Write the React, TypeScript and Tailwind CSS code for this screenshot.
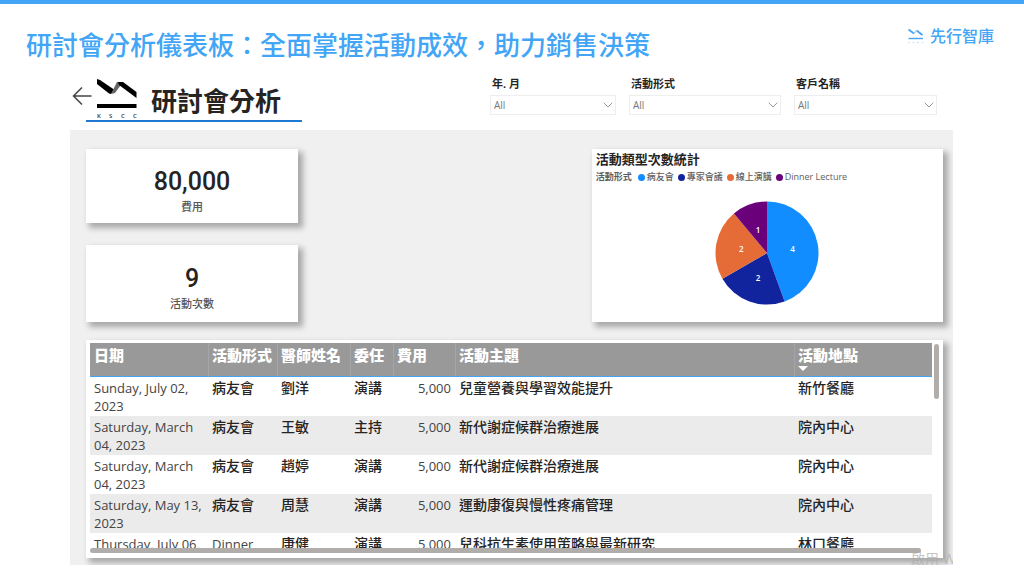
import { ChevronDown } from "lucide-react";

const filters = [
  { id: "month", label: "年. 月", box: "w-[126px]" },
  { id: "type", label: "活動形式", box: "w-[152px]" },
  { id: "client", label: "客戶名稱", box: "w-[143px]" },
];

const kpis = [
  { value: "80,000", label: "費用", box: "h-[74px] pt-[17px]" },
  { value: "9", label: "活動次數", box: "h-[77px] pt-[18px]" },
];

const slices = [
  { name: "病友會", value: 4, fill: "#118dff", dot: "bg-[#118dff]" },
  { name: "專家會議", value: 2, fill: "#12239e", dot: "bg-[#12239e]" },
  { name: "線上演講", value: 2, fill: "#e66c37", dot: "bg-[#e66c37]" },
  { name: "Dinner Lecture", value: 1, fill: "#6b007b", dot: "bg-[#6b007b]" },
];

const columns = ["日期", "活動形式", "醫師姓名", "委任", "費用", "活動主題", "活動地點"];

const rows = [
  ["Sunday, July 02, 2023", "病友會", "劉洋", "演講", "5,000", "兒童營養與學習效能提升", "新竹餐廳"],
  ["Saturday, March 04, 2023", "病友會", "王敏", "主持", "5,000", "新代謝症候群治療進展", "院內中心"],
  ["Saturday, March 04, 2023", "病友會", "趙婷", "演講", "5,000", "新代謝症候群治療進展", "院內中心"],
  ["Saturday, May 13, 2023", "病友會", "周慧", "演講", "5,000", "運動康復與慢性疼痛管理", "院內中心"],
  ["Thursday, July 06, 2023", "Dinner Lecture", "康健", "演講", "5,000", "兒科抗生素使用策略與最新研究", "林口餐廳"],
];

const card = "bg-white shadow-[4px_4px_6px_1px_rgba(0,0,0,0.3)]";

function Pie() {
  const total = slices.reduce((sum, s) => sum + s.value, 0);
  const at = (share: number, r: number) => {
    const a = share * 2 * Math.PI;
    return [52 + r * Math.sin(a), 52 - r * Math.cos(a)];
  };
  let start = 0;
  return (
    <svg viewBox="0 0 104 104" className="h-26 w-26" role="img" aria-label="活動類型次數統計">
      {slices.map((s) => {
        const share = s.value / total;
        const [x1, y1] = at(start, 51.5);
        const [x2, y2] = at(start + share, 51.5);
        const [tx, ty] = at(start + share / 2, 26);
        start += share;
        return (
          <g key={s.name}>
            <path d={`M52 52L${x1} ${y1}A51.5 51.5 0 0 1 ${x2} ${y2}Z`} fill={s.fill} />
            <text x={tx} y={ty + 4} textAnchor="middle" fontSize="8" fontWeight="600" fill="#fff">
              {s.value}
            </text>
          </g>
        );
      })}
    </svg>
  );
}

function KsccLogo() {
  return (
    <svg viewBox="0 0 40 40" className="h-10 w-10" role="img" aria-label="KSCC">
      <path d="M0 0L3 1L17 10.500L14 15L12 14.500L0 5Z" fill="#000" />
      <path d="M14 15L20 3H26L18 14Z" fill="#666" />
      <path d="M21 3H26L39.500 13V19L22 6Z" fill="#000" />
      <rect x="0" y="25" width="39.500" height="4" fill="#000" />
      <g fontSize="6" fontWeight="600" fill="#333">
        <text x="0" y="39">K</text>
        <text x="12" y="39">S</text>
        <text x="24" y="39">C</text>
        <text x="36" y="39">C</text>
      </g>
    </svg>
  );
}

export default function App() {
  return (
    <div className="border-t-4 border-[#42a5f5] bg-white font-['Open_Sans','Noto_Sans_CJK_TC',sans-serif] text-[#252423]">
      <header className="flex h-[72px] items-start justify-between pr-[30px] pl-[26px]">
        <h1 className="pt-[22px] text-[26px] leading-[38px] font-medium text-[#42a5f5]">
          研討會分析儀表板：全面掌握活動成效，助力銷售決策
        </h1>
        <div className="flex items-center gap-1.5 pt-5 text-[#42a5f5]">
          <svg viewBox="0 0 16 16" className="h-4 w-4" aria-hidden="true">
            <path d="M.5 1.500L6 5.500M8.500 2.500L14.500 7" stroke="currentColor" strokeWidth="1.800" fill="none" />
            <path d="M6 5.500L8.500 2.500" stroke="#a8d5fa" strokeWidth="1.200" />
            <path d="M.5 10.500H15" stroke="currentColor" strokeWidth="1.400" />
            <path d="M0 14.500H15.500" stroke="#d3e9fc" strokeWidth="1.500" strokeDasharray="2 2.500" />
          </svg>
          <span className="text-base leading-6 font-medium">先行智庫</span>
        </div>
      </header>

      <main className="pr-[71px] pl-[70px]">
        <div className="flex h-[54px] items-start justify-between pr-4">
          <div className="flex">
            <button type="button" aria-label="返回" className="mt-2.5 h-5 w-[22px] pl-0.5">
              <svg viewBox="0 0 20 20" className="h-5 w-5" fill="none" stroke="#444" strokeWidth="1.500">
                <path d="M19.500 10H2M10 1.500L1.500 10L10 18.500" />
              </svg>
            </button>
            <div className="-ml-1.5 flex h-[46px] w-[216px] gap-3.5 border-b-2 border-[#1f78d1] pt-[3px] pl-[11px]">
              <KsccLogo />
              <h2 className="pt-1 text-[26px] leading-9 font-bold">研討會分析</h2>
            </div>
          </div>
          <div className="flex gap-[13px]">
            {filters.map((f) => (
              <div key={f.id} className={f.box}>
                <label htmlFor={f.id} className="block pt-px pl-0.5 text-[11px] leading-[14px] font-bold">
                  {f.label}
                </label>
                <div className="relative mt-1">
                  <select
                    id={f.id}
                    className="block h-5 w-full appearance-none border border-[#eeeeee] bg-white pl-[3px] text-[10px] leading-[18px] text-[#777]"
                  >
                    <option>All</option>
                  </select>
                  <ChevronDown
                    className="pointer-events-none absolute top-0.5 right-0 h-4 w-4 text-[#999]"
                    strokeWidth={1.5}
                  />
                </div>
              </div>
            ))}
          </div>
        </div>

        <div className="relative overflow-hidden bg-[#f0f0f0] pt-[19px] pr-2.5 pb-[7px] pl-4">
          <div className="flex items-start justify-between">
            <div className="flex w-[212px] flex-col gap-[22px]">
              {kpis.map((k) => (
                <div key={k.label} className={`${card} ${k.box} text-center`}>
                  <div className="font-[Roboto,sans-serif] text-[25px] leading-8 font-medium">{k.value}</div>
                  <div className="text-[11px] leading-[18px] font-medium text-[#555]">{k.label}</div>
                </div>
              ))}
            </div>
            <section className={`${card} h-[173px] w-[41%] px-1`}>
              <h3 className="pt-px text-[13px] leading-[18px] font-bold">活動類型次數統計</h3>
              <div className="flex items-center gap-1.5 pt-px text-[9px] leading-4 text-[#605e5c]">
                <span className="font-bold">活動形式</span>
                <ul className="flex gap-1">
                  {slices.map((s) => (
                    <li key={s.name} className="flex items-center gap-0.5 font-medium">
                      <span className={`h-[7px] w-[7px] rounded-full ${s.dot}`} />
                      {s.name}
                    </li>
                  ))}
                </ul>
              </div>
              <div className="flex justify-center pt-4">
                <Pie />
              </div>
            </section>
          </div>

          <section className={`${card} mt-[18px] pt-[3px] pb-[5px] pl-1`}>
            <div className="flex gap-0.5 pr-1">
              <div className="h-[205px] flex-1 overflow-hidden">
                <table className="w-full table-fixed border-separate border-spacing-0 text-left text-sm leading-[18px]">
                  <colgroup>
                    <col className="w-[118px]" />
                    <col className="w-[69px]" />
                    <col className="w-[73px]" />
                    <col className="w-[43px]" />
                    <col className="w-[62px]" />
                    <col />
                    <col className="w-[138px]" />
                  </colgroup>
                  <thead>
                    <tr className="h-[34px] bg-[#999] align-top text-[15px] text-white">
                      {columns.map((c, i) => (
                        <th
                          key={c}
                          scope="col"
                          className="border-b border-l border-b-[#42a5f5] border-l-[#a6a6a6] pt-[3px] pl-[3px] font-black whitespace-nowrap first:border-l-0 first:pl-1"
                        >
                          {c}
                          {i === 6 && (
                            <svg viewBox="0 0 10 5" className="mt-0.5 h-[5px] w-2.5" aria-hidden="true">
                              <path d="M0 0H10L5 5Z" fill="#fff" />
                            </svg>
                          )}
                        </th>
                      ))}
                    </tr>
                  </thead>
                  <tbody>
                    {rows.map((r, n) => (
                      <tr key={n} className="h-[39px] align-top even:bg-[#ebebeb]">
                        {r.map((cell, i) => (
                          <td
                            key={i}
                            className={
                              i === 4
                                ? "pt-0.5 pr-1 text-right text-[13px] text-[#444]"
                                : i === 0 || cell.startsWith("Dinner")
                                  ? "pt-0.5 pl-1 text-[13px] text-[#444]"
                                  : "pt-0.5 pl-1 font-medium"
                            }
                          >
                            {cell}
                          </td>
                        ))}
                      </tr>
                    ))}
                  </tbody>
                </table>
              </div>
              <div className="mt-px h-[55px] w-[5px] rounded-full bg-[#b0adab]" />
            </div>
            <div className="mr-[22px] h-[5px] rounded-full bg-[#b0adab]" />
          </section>
          <div className="absolute right-0 -bottom-1 w-[42px] overflow-hidden text-sm leading-5 whitespace-nowrap text-[#aaa]/70">
            啟用 W
          </div>
        </div>
      </main>
    </div>
  );
}
